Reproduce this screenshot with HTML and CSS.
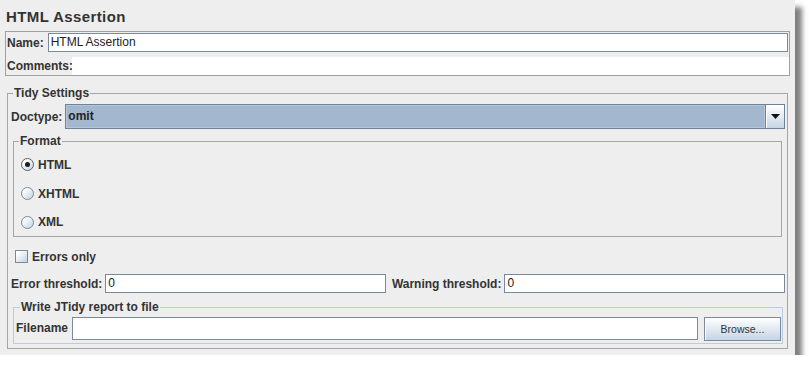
FILE: index.html
```html
<!DOCTYPE html>
<html>
<head>
<meta charset="utf-8">
<title>HTML Assertion</title>
<link rel="stylesheet" href="styles.css">
</head>
<body>
<div class="panel">
  <h1 class="title">HTML Assertion</h1>
  <div class="namebox">
    <div class="name-row">
      <span class="lbl">Name:</span>
      <div class="field name-field">HTML Assertion</div>
    </div>
    <div class="comments-row">
      <span class="lbl comments-lbl">Comments:</span>
      <div class="comments"></div>
    </div>
  </div>

  <fieldset class="group tidy">
    <legend>Tidy Settings</legend>
    <div class="doctype-row">
      <span class="lbl">Doctype:</span>
      <div class="combo">
        <span class="combo-text">omit</span>
        <span class="combo-btn"><svg width="9" height="5" viewBox="0 0 9 5"><polygon points="0,0 9,0 4.5,5" fill="#111"/></svg></span>
      </div>
    </div>

    <fieldset class="group format">
      <legend>Format</legend>
      <div class="radio-row"><span class="radio on"></span><span class="lbl">HTML</span></div>
      <div class="radio-row"><span class="radio"></span><span class="lbl">XHTML</span></div>
      <div class="radio-row last"><span class="radio"></span><span class="lbl">XML</span></div>
    </fieldset>

    <div class="check-row"><span class="check"></span><span class="lbl">Errors only</span></div>

    <div class="thresh-row">
      <span class="lbl">Error threshold:</span>
      <div class="field">0</div>
      <span class="lbl warn-lbl">Warning threshold:</span>
      <div class="field">0</div>
    </div>

    <fieldset class="group jtidy">
      <legend>Write JTidy report to file</legend>
      <div class="file-row">
        <span class="lbl">Filename</span>
        <div class="field file-field"></div>
        <button class="browse" type="button">Browse...</button>
      </div>
    </fieldset>
  </fieldset>
</div>
</body>
</html>
```

FILE: styles.css
```css
* { box-sizing: border-box; }
html, body { margin: 0; background: #fff; }
body {
  font-family: "Liberation Sans", Arial, sans-serif;
  font-size: 12px;
  color: #333;
}
.panel {
  width: 795px;
  height: 355px;
  background: #eeeeee;
  box-shadow: 7px 7px 5px rgba(0, 0, 0, 0.5);
  display: flex;
  flex-direction: column;
}
.title {
  margin: 0;
  height: 31px;
  padding: 8px 0 0 6px;
  font-size: 15px;
  line-height: 17px;
  letter-spacing: 0.4px;
  font-weight: bold;
  color: #333;
}
.lbl {
  font-weight: bold;
  white-space: nowrap;
  line-height: 14px;
}
.field {
  height: 19px;
  background: #fff;
  border: 1px solid #7a8a99;
  padding: 0 2px;
  line-height: 17px;
  font-size: 12px;
  color: #222;
}

/* name box */
.namebox {
  margin-left: 5px;
  width: 785px;
  height: 45px;
  border: 1px solid #a0a0a0;
  display: flex;
  flex-direction: column;
}
.name-row {
  display: flex;
  align-items: center;
  height: 20px;
  padding-top: 1px;
  padding-left: 1px;
}
.name-field {
  flex: 1;
  margin-left: 4px;
  margin-right: 1px;
}
.comments-row {
  display: flex;
  align-items: center;
  height: 18px;
  margin-top: 5px;
  padding-left: 1px;
}
.comments-lbl { width: 65px; }
.comments {
  flex: 1;
  height: 18px;
  background: #fff;
}

/* groups */
.group {
  margin: 0;
  padding: 0;
  border: 1px solid #a5a5a5;
  min-width: 0;
}
.group > legend {
  padding: 0 1px;
  margin-left: 5px;
  font-weight: bold;
  line-height: 14px;
  color: #333;
}
.tidy {
  margin: 10px 0 0 7px;
  width: 781px;
  padding-bottom: 4px;
}

.doctype-row {
  display: flex;
  align-items: center;
  margin: 4px 2px 0 3px;
  height: 25px;
}
.combo {
  flex: 1;
  margin-left: 3px;
  height: 25px;
  display: flex;
  border: 1px solid #6f8296;
  background: #a3b8cf;
}
.combo-text {
  flex: 1;
  border: 1px solid #b3c6da;
  padding-left: 1px;
  font-weight: bold;
  line-height: 21px;
  color: #222;
}
.combo-btn {
  width: 19px;
  border-left: 1px solid #6f8296;
  background: linear-gradient(#ffffff, #c6d5e5);
  display: flex;
  align-items: center;
  justify-content: center;
  box-shadow: inset 1px 1px 0 #fff;
}

.format {
  margin: 5px 5px 0 5px;
  padding-top: 2px;
}
.format > legend { margin-left: 5px; }
.radio-row {
  height: 29px;
  display: flex;
  align-items: center;
  padding-left: 7px;
}
.radio-row.last { height: 28px; padding-bottom: 0; }
.radio-row .radio { margin-top: 0; }
.radio {
  width: 13px;
  height: 13px;
  border-radius: 50%;
  border: 1px solid #7a8a99;
  background: linear-gradient(135deg, #ffffff 20%, #c2d2e3);
  margin-right: 4px;
  display: flex;
  align-items: center;
  justify-content: center;
}
.radio.on { border-color: #59636d; }
.radio.on::after {
  content: "";
  width: 5px;
  height: 5px;
  border-radius: 50%;
  background: #1a1a1a;
}

.check-row {
  display: flex;
  align-items: center;
  height: 25px;
  margin-top: 7px;
  padding-left: 7px;
}
.check {
  width: 13px;
  height: 13px;
  border: 1px solid #7a8a99;
  background: linear-gradient(135deg, #ffffff 15%, #c2d2e3);
  margin-right: 4px;
}

.thresh-row {
  display: grid;
  grid-template-columns: auto 1fr auto 1fr;
  align-items: center;
  column-gap: 3px;
  margin: 5px 2px 0 3px;
  height: 19px;
}
.warn-lbl { margin-left: 3px; }

.jtidy {
  margin: 7px 4px 0 5px;
  border-color: #b8cde2;
  padding: 3px 1px 2px 2px;
}
.jtidy > legend { margin-left: 4px; }
.file-row {
  display: flex;
  align-items: flex-start;
  height: 24px;
}
.file-row .lbl { line-height: 23px; }
.file-field {
  flex: 1;
  height: 23px;
  margin-left: 4px;
}
.browse {
  margin-left: 6px;
  width: 77px;
  height: 24px;
  border: 1px solid #7a8a99;
  background: linear-gradient(#ffffff, #c4d4e5);
  font-family: "Liberation Sans", Arial, sans-serif;
  font-size: 10.5px;
  color: #333;
  padding: 0;
  box-shadow: inset 1px 1px 0 #fff;
}
```
